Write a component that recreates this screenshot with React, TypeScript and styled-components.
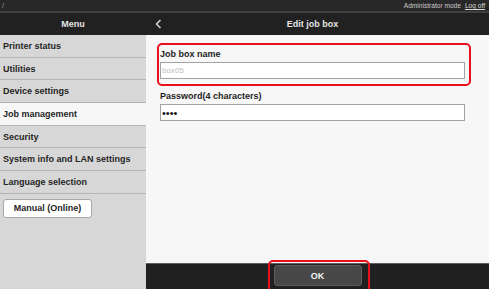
import React from "react";
import styled, { createGlobalStyle, css } from "styled-components";

const GlobalStyle = createGlobalStyle`
  html, body { margin: 0; padding: 0; background: #ffffff; }
  body { font-family: "Liberation Sans", Arial, sans-serif; }
  * { box-sizing: border-box; }
`;

const Page = styled.div`
  width: 489px;
  height: 289px;
  display: grid;
  grid-template-rows: 13px 22px 1fr;
`;

const TopBar = styled.div`
  background: #282828;
  border-bottom: 2px solid #404040;
  display: flex;
  align-items: center;
  padding: 0 4px 0 2px;
  font-size: 6.6px;
  color: #c8c8c8;
  gap: 4px;
`;

const Slash = styled.span`
  font-size: 7px;
  color: #9a9a9a;
  margin-right: auto;
`;

const LogOff = styled.a`
  color: #d8d8d8;
  text-decoration: underline;
`;

const Header = styled.div`
  display: grid;
  grid-template-columns: 146px 1fr;
  background: #212121;
  color: #e4e4e4;
  font-size: 9px;
  font-weight: bold;
`;

const HeaderLeft = styled.div`
  display: flex;
  align-items: center;
  justify-content: center;
`;

const HeaderRight = styled.div`
  display: grid;
  grid-template-columns: 30px 1fr 40px;
  align-items: center;
`;

const Back = styled.div`
  display: flex;
  align-items: center;
  padding-left: 9px;
`;

const Title = styled.div`
  text-align: center;
`;

const Body = styled.div`
  display: grid;
  grid-template-columns: 146px 1fr;
  min-height: 0;
`;

const Sidebar = styled.nav`
  background: #d7d7d7;
  display: flex;
  flex-direction: column;
`;

const MenuItem = styled.div<{ $active?: boolean; $first?: boolean }>`
  height: 22.7px;
  display: flex;
  align-items: center;
  padding-left: 3px;
  font-size: 9px;
  font-weight: bold;
  color: #262626;
  border-bottom: 1px solid #b4b4b4;
  ${(p) =>
    p.$active &&
    css`
      background: #f7f7f7;
    `}
`;

const ManualButton = styled.button`
  margin: 5px 0 0 3px;
  width: 89px;
  height: 19px;
  background: #ffffff;
  border: 1px solid #a8a8a8;
  border-radius: 3px;
  font-family: inherit;
  font-size: 9px;
  font-weight: bold;
  color: #262626;
  padding: 0;
`;

const Main = styled.div`
  display: flex;
  flex-direction: column;
  min-height: 0;
`;

const Content = styled.div`
  flex: 1;
  background: #f7f7f7;
  padding: 12px 24px 0 14px;
  display: flex;
  flex-direction: column;
  gap: 10px;
`;

const Field = styled.div<{ $highlight?: boolean }>`
  position: relative;
  display: flex;
  flex-direction: column;
  gap: 1px;
  ${(p) =>
    p.$highlight &&
    css`
      &::before {
        content: "";
        position: absolute;
        top: -4px;
        left: -3px;
        right: -6px;
        bottom: -7px;
        border: 2px solid #e8101c;
        border-radius: 5px;
        pointer-events: none;
      }
    `}
`;

const Label = styled.label`
  font-size: 9px;
  font-weight: bold;
  color: #1e1e1e;
  line-height: 14px;
`;

const TextBox = styled.input<{ $faint?: boolean }>`
  height: 17px;
  width: 100%;
  border: 1px solid #a2a2a2;
  background: #ffffff;
  padding: 0 1px;
  font-family: inherit;
  font-size: ${(p) => (p.$faint ? "8px" : "11px")};
  color: ${(p) => (p.$faint ? "#bdbdbd" : "#111111")};
  outline: none;
`;

const Footer = styled.div`
  height: 26px;
  background: #202020;
  border-top: 1px solid #5e5e5e;
  display: flex;
  justify-content: center;
  padding-top: 1px;
`;

const OkButton = styled.button`
  position: relative;
  width: 88px;
  height: 21px;
  background: #474747;
  border: 1px solid #5c5c5c;
  border-radius: 3px;
  color: #f2f2f2;
  font-family: inherit;
  font-size: 9px;
  font-weight: bold;
  padding: 0;
  &::after {
    content: "";
    position: absolute;
    top: -6px;
    left: -7px;
    right: -9px;
    bottom: -8px;
    border: 2px solid #e8101c;
    border-radius: 5px;
    pointer-events: none;
  }
`;

const menu = [
  "Printer status",
  "Utilities",
  "Device settings",
  "Job management",
  "Security",
  "System info and LAN settings",
  "Language selection",
];

export default function App() {
  return (
    <>
      <GlobalStyle />
      <Page>
        <TopBar>
          <Slash>/</Slash>
          <span>Administrator mode</span>
          <LogOff>Log off</LogOff>
        </TopBar>
        <Header>
          <HeaderLeft>Menu</HeaderLeft>
          <HeaderRight>
            <Back>
              <svg width="7" height="10" viewBox="0 0 7 10">
                <polyline points="5.5,1 1.5,5 5.5,9" fill="none" stroke="#d0d0d0" strokeWidth="1.6" />
              </svg>
            </Back>
            <Title>Edit job box</Title>
            <span />
          </HeaderRight>
        </Header>
        <Body>
          <Sidebar>
            {menu.map((m) => (
              <MenuItem key={m} $active={m === "Job management"}>
                {m}
              </MenuItem>
            ))}
            <div>
              <ManualButton>Manual (Online)</ManualButton>
            </div>
          </Sidebar>
          <Main>
            <Content>
              <Field $highlight>
                <Label>Job box name</Label>
                <TextBox $faint readOnly value="box05" />
              </Field>
              <Field>
                <Label>Password(4 characters)</Label>
                <TextBox type="password" readOnly value="1234" />
              </Field>
            </Content>
            <Footer>
              <OkButton>OK</OkButton>
            </Footer>
          </Main>
        </Body>
      </Page>
    </>
  );
}
